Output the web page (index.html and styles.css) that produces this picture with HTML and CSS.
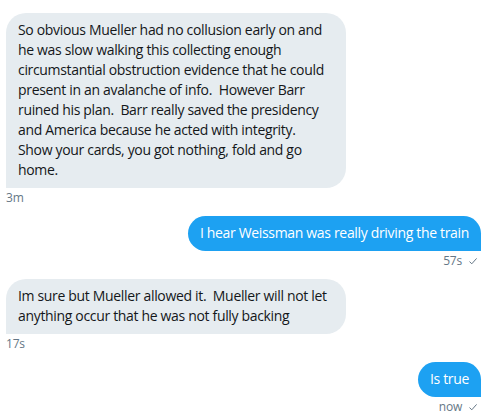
FILE: index.html
```html
<!DOCTYPE html>
<html>
<head>
<meta charset="utf-8">
<link rel="stylesheet" href="styles.css">
</head>
<body>
<div class="thread">
  <div class="msg received">
    <div class="bubble">So obvious Mueller had no collusion early on and<br>he was slow walking this collecting enough<br>circumstantial obstruction evidence that he could<br>present in an avalanche of info.&nbsp; However Barr<br>ruined his plan.&nbsp; Barr really saved the presidency<br>and America because he acted with integrity.<br>Show your cards, you got nothing, fold and go<br>home.</div>
    <div class="meta">3m</div>
  </div>
  <div class="msg sent">
    <div class="bubble">I hear Weissman was really driving the train</div>
    <div class="meta">57s <svg class="check" viewBox="0 0 10 10" width="10" height="10"><path d="M1.5 5.6 L3.8 7.8 L8.6 2.4" fill="none" stroke="#657786" stroke-width="1"/></svg></div>
  </div>
  <div class="msg received">
    <div class="bubble">Im sure but Mueller allowed it.&nbsp; Mueller will not let<br>anything occur that he was not fully backing</div>
    <div class="meta">17s</div>
  </div>
  <div class="msg sent">
    <div class="bubble">Is true</div>
    <div class="meta">now <svg class="check" viewBox="0 0 10 10" width="10" height="10"><path d="M1.5 5.6 L3.8 7.8 L8.6 2.4" fill="none" stroke="#657786" stroke-width="1"/></svg></div>
  </div>
</div>
</body>
</html>
```

FILE: styles.css
```css
html, body {
  margin: 0;
  padding: 0;
  background: #ffffff;
}
body {
  font-family: "Open Sans", "Noto Sans", sans-serif;
  color: #14171a;
}
.thread {
  display: flex;
  flex-direction: column;
  padding: 13px 16px 0 6px;
}
.msg {
  display: flex;
  flex-direction: column;
  margin-bottom: 10px;
}
.msg.received {
  align-items: flex-start;
}
.msg.sent {
  align-items: flex-end;
}
.bubble {
  font-size: 14px;
  line-height: 20px;
  letter-spacing: -0.33px;
  padding: 7px 12px 8px 12px;
  white-space: nowrap;
}
.received .bubble {
  background: #e6ecf0;
  color: #14171a;
  border-radius: 20px 20px 20px 0;
  width: 316px;
}
.sent .bubble {
  background: #1da1f2;
  color: #ffffff;
  border-radius: 20px 20px 0 20px;
}
.meta {
  font-size: 12px;
  line-height: 16px;
  letter-spacing: -0.2px;
  color: #657786;
  margin-top: 2px;
  display: flex;
  align-items: center;
  gap: 6px;
}
.sent .meta {
  padding-right: 3px;
}
.check {
  display: block;
}
```
